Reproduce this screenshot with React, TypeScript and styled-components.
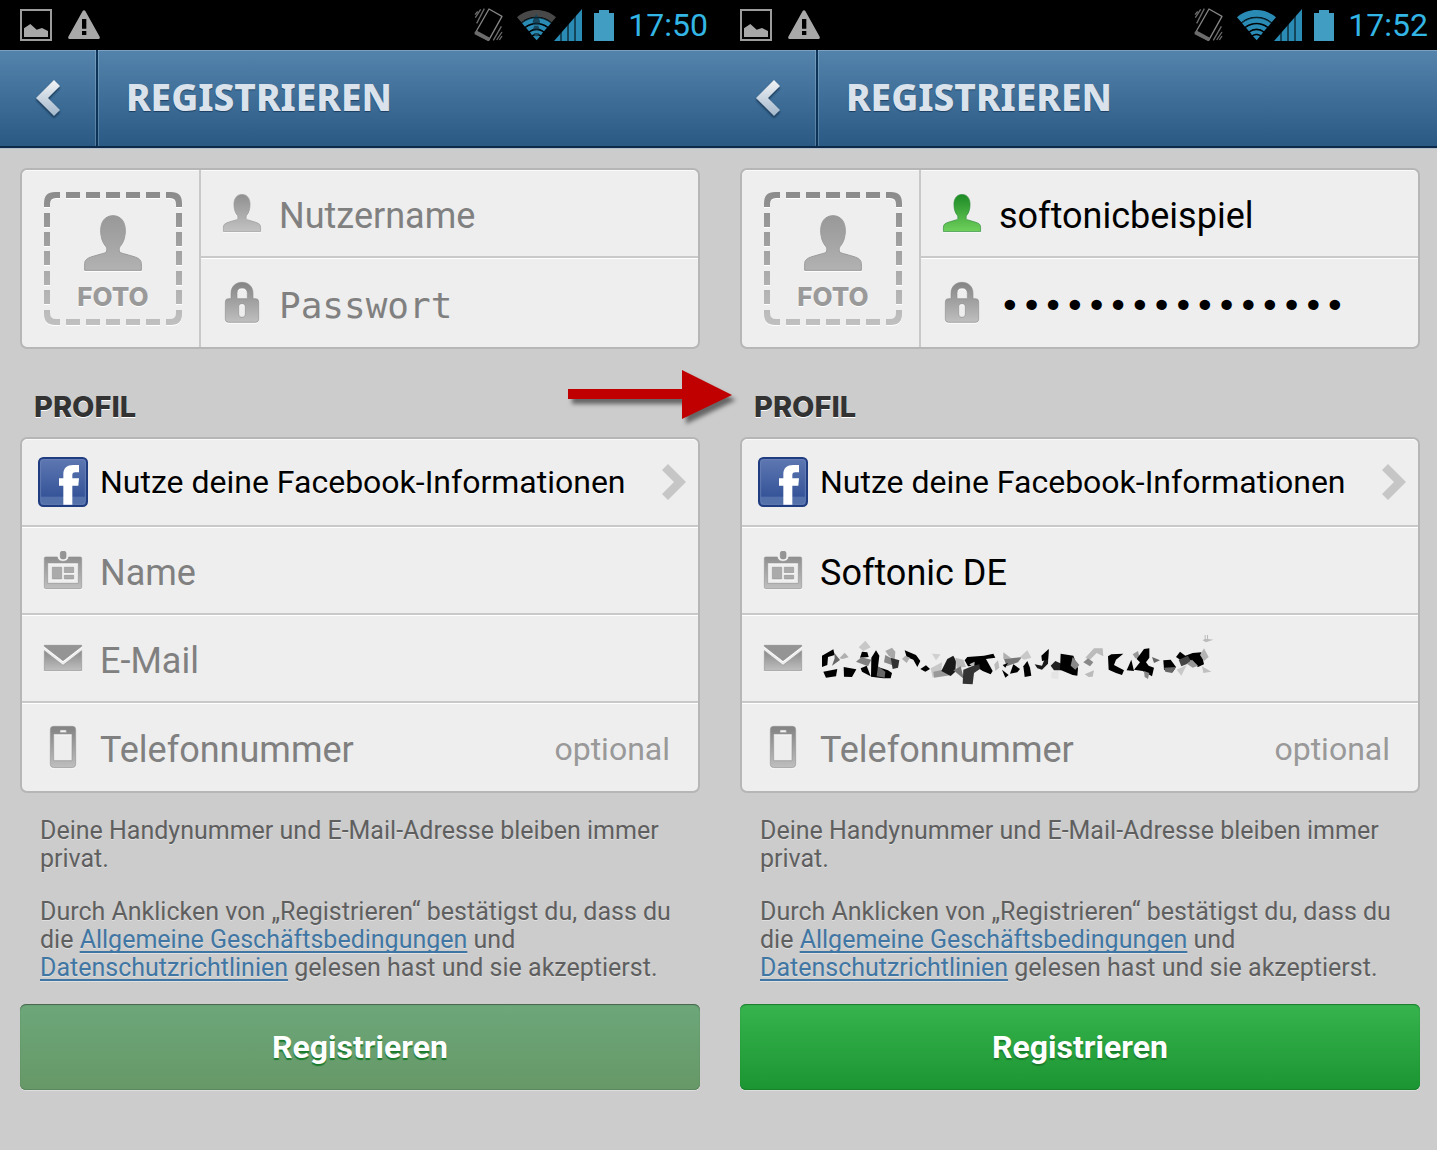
import React, { useId } from "react";
import styled, { createGlobalStyle, css } from "styled-components";

const sans = `Roboto, "Noto Sans", sans-serif`;
const mono = `"DejaVu Sans Mono", "Liberation Mono", monospace`;
const display = `Inter, "Open Sans", sans-serif`;
const heading = `"Noto Sans", "Open Sans", sans-serif`;

const GlobalStyle = createGlobalStyle`
  *, *::before, *::after { box-sizing: border-box; }
  body { margin: 0; background: #ccc; font-family: ${sans}; }
  button, input { font: inherit; color: inherit; margin: 0; padding: 0; border: 0; background: none; }
  button { cursor: pointer; }
  svg { display: block; flex: none; overflow: visible; }
`;

const Page = styled.main`
  overflow: hidden;
  min-height: 100vh;
`;

const Stage = styled.div`
  position: relative;
  display: grid;
  grid-template-columns: 1fr 1fr;
  margin-right: -3px;
`;

const Phone = styled.section`
  min-width: 0;
`;

const StatusBar = styled.div`
  display: flex;
  align-items: center;
  height: 50px;
  padding: 0 12px 0 20px;
  background: #000;
`;

const Notifications = styled.div`
  display: flex;
  flex: 1;
  gap: 16px;
`;

const Signals = styled.div`
  display: flex;
  align-items: center;
`;

const Clock = styled.time`
  margin-left: 14px;
  font-size: 32px;
  line-height: 50px;
  color: #33b5e5;
`;

const Header = styled.header`
  display: flex;
  height: 98px;
  border-bottom: 2px solid #0d2a4a;
  background: linear-gradient(#5484ac, #2a5a84);
  box-shadow: inset 0 1px #7ba0c0, 0 1px #b3bfca;
`;

const BackButton = styled.button`
  display: grid;
  place-items: center;
  width: 98px;
  border-right: 2px solid #0c3358;
  box-shadow: inset -1px 0 rgba(255, 255, 255, 0.2);
`;

const Title = styled.h1`
  flex: 1;
  margin: 0;
  padding-left: 28px;
  box-shadow: inset 1px 0 rgba(255, 255, 255, 0.2);
  font: 800 37px/94px ${heading};
  color: #dae2ec;
  text-shadow: 0 1px 1px #1d3f60;
`;

const Form = styled.form`
  display: flex;
  flex-direction: column;
  padding: 20px 20px 0;
`;

const Card = styled.div`
  display: flex;
  border: 2px solid #b6b6b6;
  border-radius: 7px;
  background: #eee;
  box-shadow: inset 0 1px #fafafa;
`;

const Rows = styled.div`
  flex: 1;
  min-width: 0;
`;

const rowBase = css`
  display: flex;
  align-items: center;
  gap: 12px;
  width: 100%;
  height: 88px;
  padding: 0 28px 0 16px;
  text-align: left;

  &:first-child { height: 86px; }
  &:last-child { height: 90px; }
`;

const Row = styled.div`
  ${rowBase}
  &:not(:first-child) {
    border-top: 2px solid #c9c9c9;
    box-shadow: inset 0 1px #fff;
  }
`;

const FacebookRow = styled.button`
  ${rowBase}
  padding-right: 12px;
  font-size: 32px;
  color: #000;
  text-shadow: 0 1px #fff;
`;

const RowText = styled.span`
  flex: 1;
  white-space: nowrap;
`;

const IconSlot = styled.label`
  display: grid;
  flex: none;
  place-items: center;
  width: 50px;
`;

const Field = styled.input<{ $mono?: boolean }>`
  flex: 1;
  min-width: 0;
  height: 84px;
  padding-top: 6px;
  outline: 0;
  font-family: ${(p) => (p.$mono ? mono : sans)};
  font-size: 36px;
  color: #000;

  &::placeholder {
    color: #808080;
    opacity: 1;
  }
`;

const Optional = styled.span`
  padding-top: 4px;
  font-size: 32px;
  color: #999;
`;

const Masked = styled.div`
  flex: 1;
  padding-top: 4px;
`;

const PhotoCell = styled.div`
  display: flex;
  width: 179px;
  padding: 22px 0 22px 22px;
  border-right: 2px solid #c9c9c9;
`;

const PhotoButton = styled.button`
  position: relative;
  display: flex;
  flex-direction: column;
  align-items: center;
  width: 138px;
  height: 133px;
  padding-top: 23px;
  font: 800 26px/30px ${display};
  color: #9a9a9a;
  text-shadow: 0 1px #fff;
`;

const DashFrame = styled.svg`
  position: absolute;
  inset: 0;
`;

const PhotoLabel = styled.span`
  margin-top: 11px;
`;

const SectionTitle = styled.h2`
  margin: 40px 0 12px;
  padding-left: 14px;
  font: 800 29px/36px ${display};
  color: #333;
  text-shadow: 0 1px #fff;
`;

const Notes = styled.div`
  padding: 24px 20px 0;
  font-size: 25px;
  line-height: 28px;
  color: #5f5f5f;
  text-shadow: 0 1px rgba(255, 255, 255, 0.4);
`;

const Note = styled.p`
  margin: 0 0 25px;
  &:last-child { margin-bottom: 22px; }
`;

const Link = styled.a`
  color: #3f76a3;
  text-decoration: underline;
  text-decoration-thickness: 2px;
  text-underline-offset: 3px;
  text-decoration-skip-ink: none;
`;

const Submit = styled.button`
  height: 86px;
  border-radius: 6px;
  background: linear-gradient(#37b44e, #1b9532);
  box-shadow: inset 0 1px 1px #1c7a30, inset 0 -1px #18822c, 0 1px #dedede;
  font-size: 32px;
  font-weight: 700;
  line-height: 86px;
  color: #fff;
  text-shadow: 0 2px 1px #1a7a2c;

  &:disabled {
    background: linear-gradient(#6ca77a, #679867);
    box-shadow: inset 0 1px 1px #47634e, inset 0 -1px #5c875c, 0 1px #dedede;
    color: #fff;
    cursor: default;
  }
`;

const Arrow = styled.svg`
  position: absolute;
  top: 370px;
  right: 50%;
  margin-right: -13px;
  filter: drop-shadow(4px 5px 2px rgba(0, 0, 0, 0.5));
`;

function Fade({ id, from = "#8f8f8f", to = "#bfbfbf" }: { id: string; from?: string; to?: string }) {
  return (
    <defs>
      <linearGradient id={id} x1="0" y1="0" x2="0" y2="1">
        <stop offset="0" stopColor={from} />
        <stop offset="1" stopColor={to} />
      </linearGradient>
    </defs>
  );
}

const Embossed = styled.svg`
  filter: drop-shadow(0 1px 0 #fff);
`;

const Raised = styled.svg`
  filter: drop-shadow(0 2px 1px rgba(0, 20, 45, 0.6));
`;

function PersonIcon({ width, height, tone = "grey" }: { width: number; height: number; tone?: "grey" | "green" | "soft" }) {
  const id = useId();
  const [from, to] = tone === "green" ? ["#1c8a24", "#6fd05c"] : tone === "soft" ? ["#989898", "#b2b2b2"] : ["#909090", "#c2c2c2"];
  const edge = tone === "green" ? "#2f8a3a" : "#999";
  return (
    <Embossed width={width} height={height} viewBox="0 0 174 168" preserveAspectRatio="none">
      <Fade id={id} from={from} to={to} />
      <path
        fill={`url(#${id})`}
        stroke={edge}
        strokeWidth="3"
        d="M87 2C62 2 50 22 50 46C50 68 56 84 65 94C68 99 69 103 68 108C67 113 62 114 55 116L24 125C8 130 2 136 2 146V166H172V146C172 136 166 130 150 125L119 116C112 114 107 113 106 108C105 103 106 99 109 94C118 84 124 68 124 46C124 22 112 2 87 2Z"
      />
    </Embossed>
  );
}

function LockIcon() {
  const id = useId();
  return (
    <Embossed width="34" height="41" viewBox="0 0 102 123">
      <Fade id={id} from="#858585" />
      <path
        fill={`url(#${id})`}
        stroke="#8d8d8d"
        strokeWidth="2"
        fillRule="evenodd"
        d="M18 50V34C18 14 32 1 51 1S84 14 84 34V50H92Q101 50 101 60V112Q101 121 92 121H10Q1 121 1 112V60Q1 50 10 50ZM36 50H67V34C67 24 61 18 51 18S36 24 36 34ZM51 65C45 65 41 69 41 75V96C41 102 45 106 51 106S61 102 61 96V75C61 69 57 65 51 65Z"
      />
    </Embossed>
  );
}

function BadgeIcon() {
  const id = useId();
  return (
    <Embossed width="38" height="38" viewBox="0 0 114 114">
      <Fade id={id} />
      <path
        fill={`url(#${id})`}
        stroke="#929292"
        strokeWidth="2"
        fillRule="evenodd"
        d="M5 18H40C41 26 47 31 57 31S73 26 74 18H109Q113 18 113 22V109Q113 113 109 113H5Q1 113 1 109V22Q1 18 5 18ZM11 36V97H103V36Z"
      />
      <rect x="49" y="1" width="17" height="23" rx="6" fill="#949494" stroke="#888" strokeWidth="2" />
      <path fill="#aaa" stroke="#949494" strokeWidth="2" d="M25 49H53V84H25ZM61 49H89V65H61ZM61 73H89V84H61Z" />
    </Embossed>
  );
}

function MailIcon() {
  const id = useId();
  return (
    <Embossed width="38" height="26" viewBox="0 0 114 78">
      <Fade id={id} from="#8a8a8a" />
      <path fill={`url(#${id})`} stroke="#929292" strokeWidth="2" d="M1 17L57 61L113 17V77H1Z" />
      <path fill="#949494" stroke="#888" strokeWidth="2" d="M1 1H113V4L57 47L1 4Z" />
    </Embossed>
  );
}

function MobileIcon() {
  const id = useId();
  return (
    <Embossed width="26" height="42" viewBox="0 0 78 126">
      <Fade id={id} from="#828282" />
      <path
        fill={`url(#${id})`}
        stroke="#929292"
        strokeWidth="2"
        fillRule="evenodd"
        d="M11 1H67Q77 1 77 11V115Q77 125 67 125H11Q1 125 1 115V11Q1 1 11 1ZM11 24V104H66V24ZM30 12V20H49V12Z"
      />
    </Embossed>
  );
}

function FacebookIcon() {
  const id = useId();
  return (
    <svg width="50" height="50" viewBox="0 0 150 150">
      <Fade id={id} from="#5f78b2" to="#2b4b92" />
      <rect x="3" y="3" width="144" height="144" rx="13" fill={`url(#${id})`} />
      <rect x="8" y="119" width="134" height="24" fill="#5470aa" />
      <rect x="8" y="8" width="134" height="134" rx="9" fill="none" stroke="#6f87bb" strokeWidth="2" />
      <rect x="3" y="3" width="144" height="144" rx="13" fill="none" stroke="#203d82" strokeWidth="6" />
      <path fill="#fff" d="M76 143V86H63V64H76V52C76 33 87 24 106 24H123V46H112C105 46 103 49 103 55V64H123L121 86H103V143Z" />
    </svg>
  );
}

function ChevronRight() {
  return (
    <svg width="24" height="36" viewBox="0 0 24 36">
      <path fill="#c6c6c6" d="M6 0L24 18L6 36L0 30L12 18L0 6Z" />
    </svg>
  );
}

function BackIcon() {
  const id = useId();
  return (
    <Raised width="24" height="36" viewBox="0 0 24 36">
      <Fade id={id} from="#f2f4f6" to="#a3b7cb" />
      <path fill={`url(#${id})`} d="M18 0L24 6L12 18L24 30L18 36L0 18Z" />
    </Raised>
  );
}

function PictureIcon() {
  return (
    <svg width="32" height="32" viewBox="0 0 96 96">
      <rect x="3" y="3" width="90" height="90" fill="none" stroke="#9c9c9c" strokeWidth="6" />
      <path fill="#a8a8a8" d="M12 84V58L31 45L50 62L66 57L84 66V84Z" />
    </svg>
  );
}

function WarningIcon() {
  return (
    <svg width="32" height="32" viewBox="0 0 96 96">
      <path fill="#a8a8a8" fillRule="evenodd" d="M44 6Q48 1 52 6L95 83Q97 90 90 90H6Q-1 90 1 83ZM42 30V59H55V30ZM42 66V78H55V66Z" />
    </svg>
  );
}

function VibrateIcon() {
  return (
    <svg width="29" height="34" viewBox="0 0 87 102">
      <path fill="none" stroke="#858585" strokeWidth="4" strokeLinejoin="round" d="M45 3L84 25L44 97L4 75Z" />
      <path fill="#6c6c6c" d="M2 72L9 68L49 90L43 100L2 79Z" />
      <path fill="none" stroke="#6c6c6c" strokeWidth="4" d="M31 2L8 46M20 4L4 29M11 10L3 20M82 55L58 97M84 72L68 96M84 84L76 96" />
    </svg>
  );
}

function WifiIcon({ weak }: { weak?: boolean }) {
  return (
    <svg width="37" height="32" viewBox="0 0 111 96">
      <path fill={weak ? "#484848" : "#2a8bb5"} d="M0 25C33 -4 84 -4 117 25L104 40C78 18 39 18 13 40Z" />
      <path
        fill="#2a8bb5"
        d="M14 41C40 20 77 20 103 41L93 53C74 38 43 38 24 53ZM27 56C46 42 71 42 90 56L81 67C68 57 49 57 36 67ZM39 70C51 62 66 62 78 70L72 79C64 73 53 73 45 79ZM48 82Q58 75 69 82L59 94Z"
      />
      {weak && <path fill="#17485e" d="M58 15L69 36L67 49H49L47 36ZM52 51H64L69 62H47ZM51 72H66L62 82H55Z" />}
      <path fill="none" stroke="#000" strokeWidth="2" d="M15 42C40 21 77 21 102 42M25 54C45 39 72 39 92 54M37 68C50 58 67 58 80 68" />
    </svg>
  );
}

function CellIcon() {
  return (
    <svg width="28" height="32" viewBox="0 0 84 96">
      <path fill="#2a8bb5" d="M0 96L84 0V96Z" />
      <path stroke="#000" strokeWidth="3" d="M21 66V96M42 44V96M63 20V96" />
    </svg>
  );
}

function BatteryIcon() {
  return (
    <svg width="20" height="31" viewBox="0 0 60 93">
      <path fill="#429dc2" d="M15 0H45V9H60V93H0V9H15Z" />
    </svg>
  );
}

const Gap = styled.span<{ $w: number }>`
  width: ${(p) => p.$w}px;
`;

function DashedFrame() {
  const id = useId();
  const xs = [22, 42, 62, 82, 102];
  const ys = [21, 40, 59, 79, 98];
  return (
    <DashFrame as={Embossed} width="138" height="133" viewBox="0 0 138 133" aria-hidden="true">
      <defs>
        <linearGradient id={id} gradientUnits="userSpaceOnUse" x1="0" y1="0" x2="0" y2="133">
          <stop offset="0" stopColor="#8b8b8b" />
          <stop offset="1" stopColor="#c0c0c0" />
        </linearGradient>
      </defs>
      <g fill={`url(#${id})`}>
        {xs.map((x) => (
          <React.Fragment key={x}>
            <rect x={x} y="0" width="14" height="6" />
            <rect x={x} y="127" width="14" height="6" />
          </React.Fragment>
        ))}
        {ys.map((y) => (
          <React.Fragment key={y}>
            <rect x="0" y={y} width="6" height="14" />
            <rect x="132" y={y} width="6" height="14" />
          </React.Fragment>
        ))}
        <path d="M0 15V11Q0 0 11 0H16V6H12Q6 6 6 12V15ZM138 15V11Q138 0 127 0H122V6H126Q132 6 132 12V15ZM0 118V122Q0 133 11 133H16V127H12Q6 127 6 121V118ZM138 118V122Q138 133 127 133H122V127H126Q132 127 132 121V118Z" />
      </g>
    </DashFrame>
  );
}

const shards: [string, string][] = [
  ["#000", "M38 92L72 73L76 90L56 96L54 120L38 126Z"],
  ["#000", "M42 140L84 132L80 154L50 158Z"],
  ["#666", "M75 84L92 105L68 122L76 100Z"],
  ["#b0b0b0", "M90 100L106 83L118 97L100 102Z"],
  ["#000", "M103 126L141 133L128 156L104 155Z"],
  ["#c8c8c8", "M148 67L168 47L184 67L162 78Z"],
  ["#000", "M158 80L174 82L178 96L152 98Z"],
  ["#808080", "M140 110L156 97L186 104L176 124Z"],
  ["#000", "M154 130L172 122L184 154L158 140Z"],
  ["#000", "M186 98L200 76L210 92L206 126L236 136L248 144L244 160L222 160L185 155Z"],
  ["#666", "M206 124L228 140L226 158L202 154Z"],
  ["#a8a8a8", "M228 78L248 68L258 80L256 106L238 92Z"],
  ["#888", "M228 90L246 100L254 122L224 112Z"],
  ["#333", "M244 98L270 106L266 128L250 132Z"],
  ["#000", "M286 76L320 90L333 108L324 126L312 104L292 96Z"],
  ["#b0b0b0", "M278 102L288 92L302 98L292 114Z"],
  ["#000", "M333 132L350 121L362 132L348 140Z"],
  ["#d0d0d0", "M368 86L394 88L380 106Z"],
  ["#c8c8c8", "M364 130L398 112L396 140L370 158Z"],
  ["#999", "M372 140L402 134L428 150L374 158Z"],
  ["#1a1a1a", "M396 138L414 102L432 92L440 108L438 140L424 153Z"],
  ["#bbb", "M438 98L462 104L470 126L442 128Z"],
  ["#777", "M432 136L454 124L464 162Z"],
  ["#000", "M466 106L474 96L524 92L552 86L558 98L530 102L550 138L544 148L520 138L496 122L476 124Z"],
  ["#bbb", "M480 118L496 110L494 130Z"],
  ["#333", "M462 134L488 124L510 118L512 132L494 144L490 178L460 176Z"],
  ["#bbb", "M555 118L566 106L570 128L558 138Z"],
  ["#b0b0b0", "M582 82L606 100L582 102Z"],
  ["#777", "M584 102L638 96L626 112L592 124Z"],
  ["#c8c8c8", "M632 96L654 76L666 98L644 104Z"],
  ["#000", "M580 120L596 114L588 128ZM578 134L598 150L588 158Z"],
  ["#000", "M602 146L612 118L632 132L624 142Z"],
  ["#000", "M642 124L654 108L662 128L666 152L646 156Z"],
  ["#1a1a1a", "M676 118L698 122L718 72L716 116L698 134L684 130Z"],
  ["#000", "M696 92L718 72L716 104L698 108Z"],
  ["#222", "M724 122L738 108L760 118L756 136L734 136Z"],
  ["#000", "M754 86L792 92L806 130L804 152L790 150L752 134Z"],
  ["#888", "M790 96L810 120L798 134L784 122Z"],
  ["#e4e4e4", "M726 142L748 138L746 162L726 160Z"],
  ["#bbb", "M828 98L854 70L880 70L882 94L862 84L842 104Z"],
  ["#888", "M822 112L836 100L852 112L842 124Z"],
  ["#bbb", "M826 148L854 136L850 155L838 156Z"],
  ["#000", "M896 94L906 88L942 86L920 104L914 120L944 136L938 150L920 144L898 134Z"],
  ["#000", "M952 136L966 104L974 138Z"],
  ["#999", "M970 88L986 78L992 102L978 100Z"],
  ["#000", "M982 102L1004 72L1020 70L1020 98L1010 112L1018 122L1034 128L1028 154L1000 138L974 134L992 112Z"],
  ["#888", "M1004 138L1020 144L1016 162L1006 156Z"],
  ["#666", "M1028 96L1052 106L1034 114Z"],
  ["#000", "M1062 106L1084 104L1100 126L1090 142L1064 134Z"],
  ["#666", "M1064 128L1100 126L1088 144L1068 140Z"],
  ["#000", "M1100 96L1112 80L1128 92L1150 84L1176 82L1184 118L1166 126L1142 104L1118 108Z"],
  ["#444", "M1108 104L1136 92L1146 112L1116 124Z"],
  ["#c8c8c8", "M1102 134L1132 120L1116 152Z"],
  ["#999", "M1132 116L1148 104L1166 122L1150 128Z"],
  ["#b4b4b4", "M1172 90L1184 70L1198 96L1184 108Z"],
  ["#c0c0c0", "M1178 124L1206 140L1182 144Z"],
  ["#bbb", "M1186 30H1189V42H1193V30H1196V42L1212 44L1190 52L1180 46L1186 42Z"],
];

function MaskedAddress() {
  return (
    <Masked>
      <svg width="420" height="70" viewBox="32 0 1260 210" role="img" aria-label="E-Mail">
        {shards.map(([fill, d], i) => (
          <path key={i} fill={fill} d={d} />
        ))}
      </svg>
    </Masked>
  );
}

interface PhoneProps {
  time: string;
  weakWifi?: boolean;
  username?: string;
  password?: string;
  name?: string;
  maskedEmail?: boolean;
  disabled?: boolean;
}

function RegisterPhone({ time, weakWifi, username = "", password = "", name = "", maskedEmail, disabled }: PhoneProps) {
  const id = useId();
  return (
    <Phone>
      <StatusBar>
        <Notifications>
          <PictureIcon />
          <WarningIcon />
        </Notifications>
        <Signals>
          <VibrateIcon />
          <Gap $w={14} />
          <WifiIcon weak={weakWifi} />
          <CellIcon />
          <Gap $w={12} />
          <BatteryIcon />
          <Clock>{time}</Clock>
        </Signals>
      </StatusBar>
      <Header>
        <BackButton type="button" aria-label="Zurück">
          <BackIcon />
        </BackButton>
        <Title>REGISTRIEREN</Title>
      </Header>
      <Form onSubmit={(e) => e.preventDefault()}>
        <Card>
          <PhotoCell>
            <PhotoButton type="button">
              <DashedFrame />
              <PersonIcon width={58} height={56} tone="soft" />
              <PhotoLabel>FOTO</PhotoLabel>
            </PhotoButton>
          </PhotoCell>
          <Rows>
            <Row>
              <IconSlot htmlFor={`${id}u`} aria-label="Nutzername">
                <PersonIcon width={38} height={38} tone={username ? "green" : "grey"} />
              </IconSlot>
              <Field id={`${id}u`} placeholder="Nutzername" defaultValue={username} spellCheck={false} />
            </Row>
            <Row>
              <IconSlot htmlFor={`${id}p`} aria-label="Passwort">
                <LockIcon />
              </IconSlot>
              <Field id={`${id}p`} type="password" placeholder="Passwort" defaultValue={password} $mono />
            </Row>
          </Rows>
        </Card>

        <SectionTitle>PROFIL</SectionTitle>
        <Card>
          <Rows>
            <FacebookRow type="button">
              <FacebookIcon />
              <RowText>Nutze deine Facebook-Informationen</RowText>
              <ChevronRight />
            </FacebookRow>
            <Row>
              <IconSlot htmlFor={`${id}n`} aria-label="Name">
                <BadgeIcon />
              </IconSlot>
              <Field id={`${id}n`} placeholder="Name" defaultValue={name} spellCheck={false} />
            </Row>
            <Row>
              <IconSlot htmlFor={`${id}e`} aria-label="E-Mail">
                <MailIcon />
              </IconSlot>
              {maskedEmail ? <MaskedAddress /> : <Field id={`${id}e`} type="email" placeholder="E-Mail" />}
            </Row>
            <Row>
              <IconSlot htmlFor={`${id}t`} aria-label="Telefonnummer">
                <MobileIcon />
              </IconSlot>
              <Field id={`${id}t`} type="tel" placeholder="Telefonnummer" />
              <Optional>optional</Optional>
            </Row>
          </Rows>
        </Card>

        <Notes>
          <Note>Deine Handynummer und E-Mail-Adresse bleiben immer privat.</Note>
          <Note>
            Durch Anklicken von „Registrieren“ bestätigst du, dass du die{" "}
            <Link href="#agb">Allgemeine Geschäftsbedingungen</Link> und{" "}
            <Link href="#datenschutz">Datenschutzrichtlinien</Link> gelesen hast und sie akzeptierst.
          </Note>
        </Notes>
        <Submit type="submit" disabled={disabled}>Registrieren</Submit>
      </Form>
    </Phone>
  );
}

export default function App() {
  return (
    <>
      <GlobalStyle />
      <Page>
        <Stage>
          <RegisterPhone time="17:50" weakWifi disabled />
          <RegisterPhone
            time="17:52"
            username="softonicbeispiel"
            password="softonicbeispiel"
            name="Softonic DE"
            maskedEmail
          />
          <Arrow width="165" height="50" viewBox="0 0 165 50" aria-hidden="true">
            <path fill="#c00000" d="M0 19H114V0L164 25L114 49V29H0Z" />
          </Arrow>
        </Stage>
      </Page>
    </>
  );
}
